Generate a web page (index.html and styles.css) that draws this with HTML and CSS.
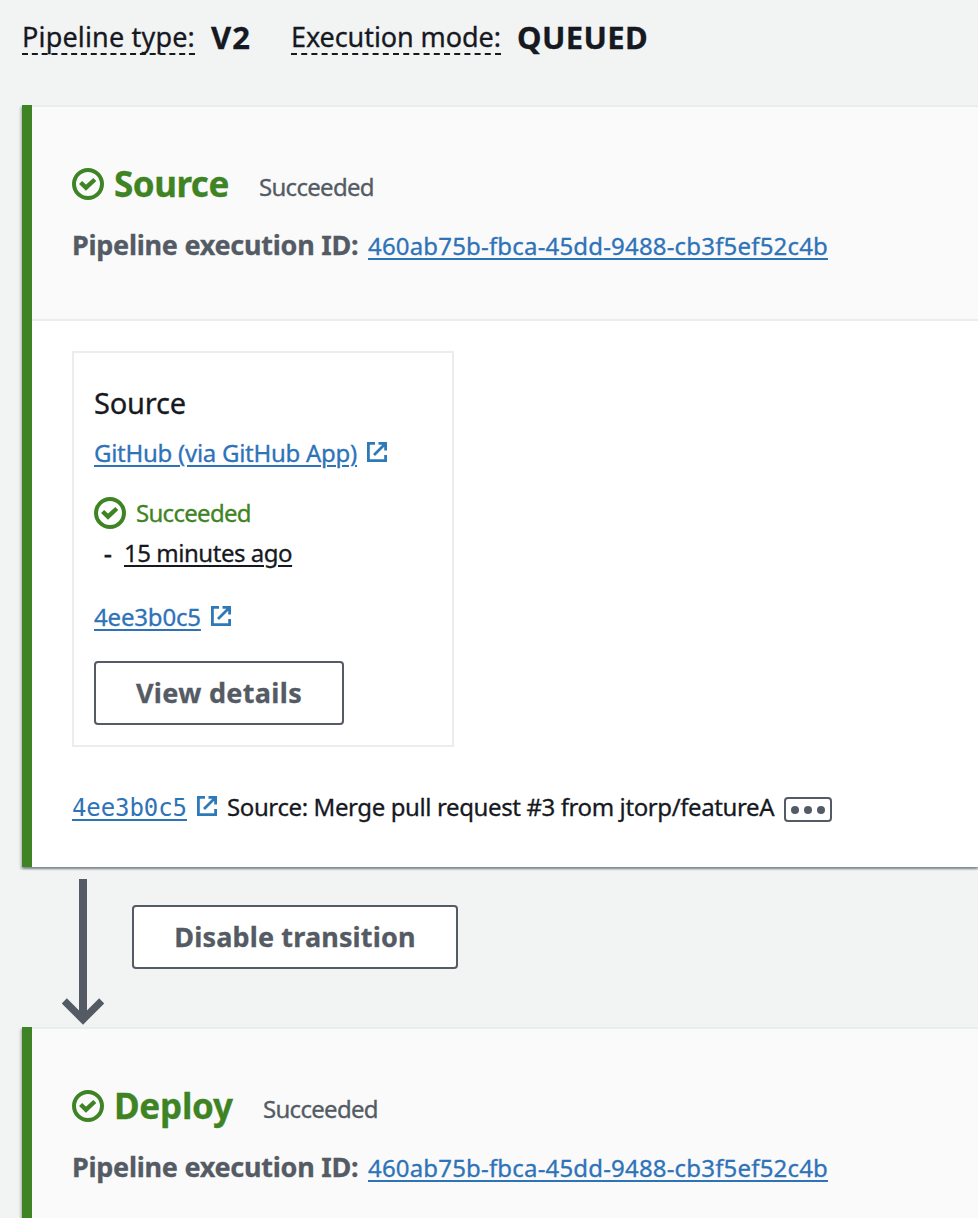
FILE: index.html
```html
<!DOCTYPE html>
<html lang="en">
<head>
<meta charset="utf-8">
<title>Pipeline</title>
<link rel="stylesheet" href="styles.css">
</head>
<body>
<svg class="sprite" aria-hidden="true">
  <symbol id="check" viewBox="0 0 32 32">
    <circle cx="16" cy="16" r="14" fill="none" stroke="currentColor" stroke-width="4"/>
    <path d="M8.600 14.500l5.400 5.200 8.800-8.200" fill="none" stroke="currentColor" stroke-width="4.400"/>
  </symbol>
  <symbol id="external" viewBox="0 0 20 20">
    <path d="M8 1.400H1.400v17.200h17.200V13M11.500 1.400h7.100V8.500M18.500 1.500L7 13" fill="none" stroke="currentColor" stroke-width="2.800"/>
  </symbol>
</svg>
<header class="meta">
  <span class="term type">Pipeline type:</span><strong class="value v2">V2</strong>
  <span class="term mode">Execution mode:</span><strong class="value queued">QUEUED</strong>
</header>
<section class="stage">
  <div class="stage-head">
    <div class="title-row"><svg class="check"><use href="#check"/></svg><h2 class="source-title">Source</h2><span class="state">Succeeded</span></div>
    <div class="id-row"><span class="id-label">Pipeline execution ID:</span><a class="id-link">460ab75b-fbca-45dd-9488-cb3f5ef52c4b</a></div>
  </div>
  <div class="stage-body">
    <article class="action">
      <h3 class="action-name">Source</h3>
      <div class="provider"><a class="github">GitHub (via GitHub App)</a><svg class="external"><use href="#external"/></svg></div>
      <div class="status"><svg class="check"><use href="#check"/></svg><span class="state ok">Succeeded</span></div>
      <div class="when"><span class="dash">-</span><span class="ago">15 minutes ago</span></div>
      <div class="commit"><a class="sha">4ee3b0c5</a><svg class="external"><use href="#external"/></svg></div>
      <button class="button"><span class="view">View details</span></button>
    </article>
    <div class="revision"><a class="mono">4ee3b0c5</a><svg class="external"><use href="#external"/></svg><span class="message">Source: Merge pull request #3 from jtorp/featureA</span><span class="more"><i></i><i></i><i></i></span></div>
  </div>
</section>
<div class="transition">
  <svg class="arrow" viewBox="0 0 42 146"><path d="M21 0v138" fill="none" stroke="currentColor" stroke-width="8"/><path d="M2.300 121.900L21 140.600l18.700-18.700" fill="none" stroke="currentColor" stroke-width="7.200"/></svg>
  <button class="button wide"><span class="disable">Disable transition</span></button>
</div>
<section class="stage">
  <div class="stage-head">
    <div class="title-row"><svg class="check"><use href="#check"/></svg><h2 class="deploy-title">Deploy</h2><span class="state">Succeeded</span></div>
    <div class="id-row"><span class="id-label">Pipeline execution ID:</span><a class="id-link">460ab75b-fbca-45dd-9488-cb3f5ef52c4b</a></div>
  </div>
</section>
</body>
</html>
```
FILE: styles.css
```css
* { box-sizing: border-box; }
body {
  margin: 0;
  height: 1218px;
  overflow: hidden;
  background: #f2f3f3;
  color: #16191f;
  font: 24px/30px "Noto Sans", sans-serif;
  -webkit-text-stroke: .3px currentColor;
}
.sprite { display: none; }
h2, h3 { margin: 0; }
a { color: #2e73b8; }
a, .ago { text-decoration: underline; text-decoration-thickness: 2px; text-underline-offset: 3px; }
.meta { display: flex; height: 105px; padding: 16px 0 0 22px; white-space: nowrap; }
.term { height: 39px; font-size: 27px; line-height: 41px; border-bottom: 2px dashed #16191f; }
.value { font-size: 31px; line-height: 42px; letter-spacing: .4px; }
.type { width: 173px; letter-spacing: .17px; }
.mode { width: 210px; letter-spacing: -.08px; }
.v2 { width: 80px; margin-left: 16px; letter-spacing: 1px; }
.queued { margin-left: 16px; }
.stage {
  margin-left: 22px;
  border-left: 10px solid #3f8424;
  background: #fff;
  box-shadow: 0 2px 2px rgba(0, 28, 36, .3), 2px 2px 2px rgba(0, 28, 36, .15), -2px 2px 2px rgba(0, 28, 36, .15);
  white-space: nowrap;
}
.stage-head { height: 216px; padding: 55px 0 0 40px; background: #fafafa; border-top: 2px solid #eaeded; border-bottom: 2px solid #eaeded; }
.title-row { display: flex; height: 48px; align-items: center; color: #3f8424; }
.title-row .check { margin-bottom: 4px; }
h2 { margin-left: 10px; padding-bottom: 4px; font-size: 35px; line-height: 40px; }
.source-title { width: 145px; letter-spacing: -.5px; }
.deploy-title { width: 149px; letter-spacing: -.25px; }
.state { color: #545b64; letter-spacing: -.7px; }
.title-row .state { padding-top: 2px; }
.check { width: 32px; height: 32px; flex: none; }
.id-row { display: flex; height: 40px; align-items: baseline; line-height: 40px; margin-top: 15px; }
.id-label { width: 296px; color: #545b64; font-weight: 700; font-size: 27px; letter-spacing: -.27px; }
.id-link { letter-spacing: .175px; }
.stage-body { height: 546px; padding: 30px 0 0 40px; }
.action { width: 382px; height: 396px; padding: 30px 20px 0; border: 2px solid #eaeded; }
h3 { font-size: 29px; font-weight: 400; line-height: 40px; letter-spacing: -.2px; }
.provider { display: flex; height: 30px; margin-top: 15px; }
.external { width: 20px; height: 20px; flex: none; margin: 4px 0 0 10px; color: #2e7ab8; }
.github { width: 263px; letter-spacing: -.27px; }
.status { display: flex; margin-top: 29px; height: 32px; line-height: 32px; gap: 10px; color: #3f8424; }
.status .ok { color: #3f8424; }
.when { display: flex; margin-top: 9px; height: 30px; padding-left: 10px; }
.dash { width: 20px; -webkit-text-stroke-width: .8px; }
.ago { letter-spacing: -.47px; }
.commit { display: flex; margin-top: 34px; height: 30px; }
.sha { width: 107px; letter-spacing: -.17px; }
.button { display: block; width: 250px; height: 64px; padding: 0; margin-top: 29px; border: 2px solid #545b64; border-radius: 4px; background: #fff; color: #545b64; font: 700 27px/60px "Noto Sans", sans-serif; white-space: nowrap; -webkit-text-stroke: inherit; }
.view { letter-spacing: .33px; }
.disable { letter-spacing: .15px; }
.revision { display: flex; margin-top: 45px; height: 30px; }
.mono { width: 115px; font: 24px/32px "DejaVu Sans Mono", monospace; letter-spacing: -.08px; -webkit-text-stroke: 0; }
.message { margin-left: 10px; width: 548px; letter-spacing: -.39px; }
.more { display: flex; width: 48px; height: 25px; margin: 5px 0 0 9px; border: 2px solid #545b64; border-radius: 4px; align-items: center; justify-content: center; gap: 5px; }
.more i { width: 8px; height: 8px; border-radius: 50%; background: #545b64; }
.transition { display: flex; height: 160px; padding: 12px 0 0 62px; color: #545b64; }
.arrow { width: 42px; height: 146px; }
.wide { width: 326px; margin: 26px 0 0 28px; }
```
